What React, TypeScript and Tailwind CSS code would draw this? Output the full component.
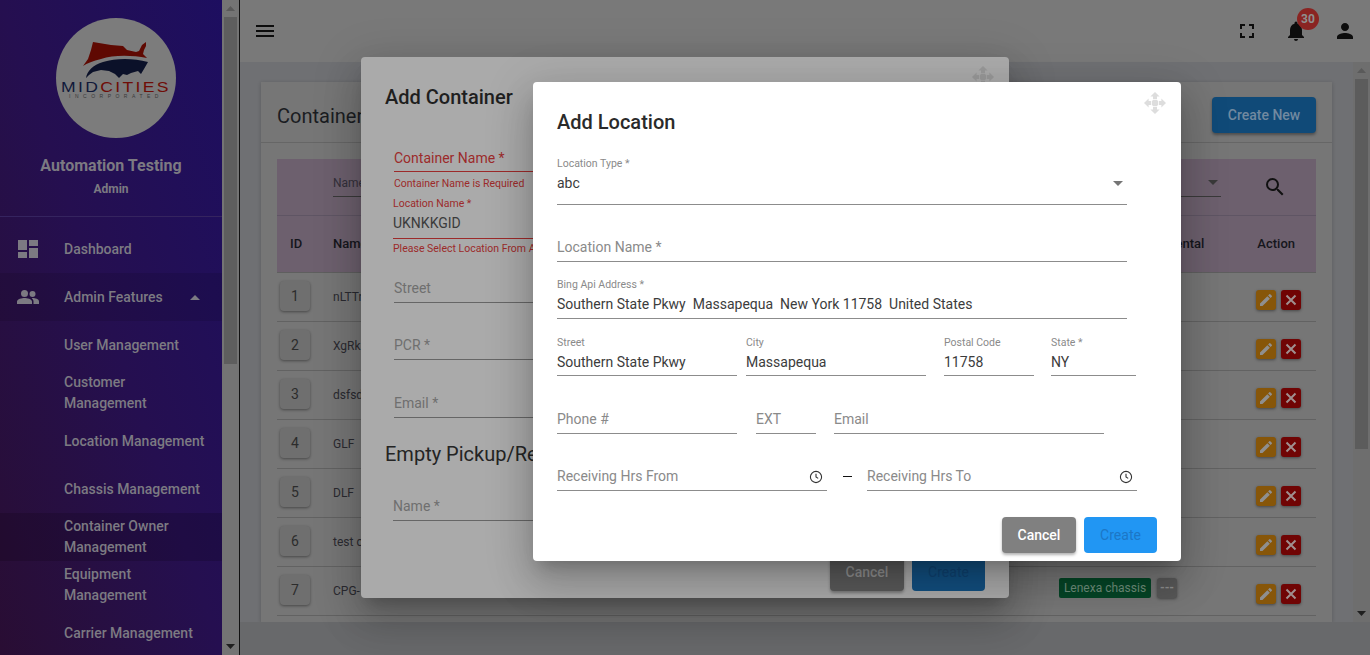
import React from 'react';

const sideItems = [
  { label: 'User Management', nowrap: true },
  { label: 'Customer Management' },
  { label: 'Location Management', nowrap: true },
  { label: 'Chassis Management', nowrap: true },
  { label: 'Container Owner Management', active: true },
  { label: 'Equipment Management' },
  { label: 'Carrier Management', nowrap: true },
];

const rows = ['nLTTr', 'XgRk', 'dsfsd', 'GLF', 'DLF', 'test c', 'CPG-'];

const ScrollArrow = ({ up }: { up?: boolean }) => (
  <div className="h-[17px] flex items-center justify-center shrink-0">
    <svg width="9" height="5" viewBox="0 0 9 5" className={up ? 'fill-[#5a5a5a]' : 'fill-[#1f1f1f]'}>
      <path d={up ? 'M4.5 0 9 5H0z' : 'M0 0h9L4.5 5z'} />
    </svg>
  </div>
);

const MoveIcon = ({ className }: { className: string }) => (
  <svg width="22" height="22" viewBox="0 0 22 22" className={className}>
    <path d="M11 0l4.6 4.6H13v2.6H9V4.6H6.4z" />
    <path d="M11 22l4.6-4.6H13v-2.6H9v2.6H6.4z" />
    <path d="M0 11l4.6-4.6V9h2.6v4H4.6v2.6z" />
    <path d="M22 11l-4.6-4.6V9h-2.6v4h2.6v2.6z" />
    <path d="M9 8h4l1 1v4l-1 1H9l-1-1V9z" />
  </svg>
);

const ClockIcon = () => (
  <svg width="14" height="14" viewBox="0 0 14 14" fill="none" stroke="#333" strokeWidth="1.1">
    <circle cx="7" cy="7" r="5.6" />
    <path d="M7 3.8V7l2.2 1.4" />
  </svg>
);

const Logo = () => (
  <div className="w-[120px] h-[120px] rounded-full bg-[#7c7c7c] flex flex-col items-center shrink-0 overflow-hidden">
    <svg width="70" height="36" viewBox="0 0 70 36" className="mt-[24px] shrink-0">
      <path fill="#5f0902" d="M12 0L30 3 42 4 46 8 55 10 58 9 61 3 65 0 65 4 63 8 62 12 66 16C50 13 32 13 20 17 12 19 6 21 2 24L7 17 10 8Z" />
      <path fill="#0b1129" d="M5 36C6 29 12 23 22 20 35 16 52 16 67 20L63 27 60 32 57 29 50 31 46 33 42 32 38 36 34 32 28 29 20 28 12 30 8 33Z" />
    </svg>
    <div className="mt-[0.5px] flex justify-center font-['Liberation_Sans',sans-serif] text-[15px] leading-[15px] scale-x-[1.17] tracking-[2px] whitespace-nowrap">
      <span className="text-[#10193a]">MID</span>
      <span className="text-[#6f0d07]">CITIES</span>
    </div>
    <div className="mt-[-0.5px] text-[5px] leading-[6px] tracking-[4.5px] whitespace-nowrap text-[#3a3a3a] font-['Liberation_Sans',sans-serif]">INCORPORATED</div>
  </div>
);

const Sidebar = () => (
  <aside className="w-[222px] shrink-0 h-full overflow-hidden flex flex-col items-stretch bg-gradient-to-bl from-[#1d0e60] via-[#250f50] to-[#290d33] text-[#7c7a82]">
    <div className="h-[217px] shrink-0 border-b border-[#35245f] flex flex-col items-center pt-[18px]">
      <div className="pl-[10px]"><Logo /></div>
      <div className="mt-[17px] text-[16px] leading-[22px] font-bold">Automation Testing</div>
      <div className="mt-[4px] text-[12px] leading-[16px] font-bold">Admin</div>
    </div>
    <div className="h-[56px] shrink-0 flex items-center pl-[18px] text-[14px] font-medium pt-[8px]">
      <svg width="20" height="18" viewBox="0 0 20 18" className="fill-[#7c7a82] mr-[26px]">
        <path d="M0 0h9v10H0zM0 12h9v6H0zM11 0h9v6h-9zM11 8h9v10h-9z" />
      </svg>
      Dashboard
    </div>
    <div className="h-[48px] shrink-0 flex items-center pl-[17px] text-[14px] font-medium bg-black/10">
      <svg width="22" height="14" viewBox="0 0 22 14" className="fill-[#7c7a82] mr-[25px]">
        <circle cx="7.5" cy="3.5" r="3.5" />
        <circle cx="15.5" cy="4" r="3" />
        <path d="M0 14v-2.5C0 9 5 8 7.5 8S15 9 15 11.5V14zM16.5 14v-2.5c0-1.4-.7-2.4-1.8-3.3.4 0 .8-.1 1.1-.1 2.2 0 6.2 1 6.2 3.4V14z" />
      </svg>
      Admin Features
      <svg width="10" height="5" viewBox="0 0 10 5" className="fill-[#7c7a82] ml-[27px]">
        <path d="M5 0l5 5H0z" />
      </svg>
    </div>
    {sideItems.map((item) => (
      <div
        key={item.label}
        className={`h-[48px] shrink-0 flex items-center pl-[64px] pr-[16px] text-[14px] leading-[21px] font-medium ${item.active ? 'bg-black/15' : ''}`}
      >
        <span className={item.nowrap ? 'whitespace-nowrap' : 'w-[120px]'}>{item.label}</span>
      </div>
    ))}
  </aside>
);

const RowActions = () => (
  <div className="flex gap-[5px] mt-[6px]">
    <button className="w-[20px] h-[20px] rounded-[3px] bg-[#875609] shadow-[0_1px_3px_rgba(0,0,0,.4)] flex items-center justify-center">
      <svg width="16" height="16" viewBox="0 0 24 24" className="fill-[#8f8f8f]">
        <path d="M3 17.25V21h3.75L17.81 9.94l-3.75-3.75L3 17.25zM20.71 7.04a1 1 0 0 0 0-1.41l-2.34-2.34a1 1 0 0 0-1.41 0l-1.83 1.83 3.75 3.75 1.83-1.83z" />
      </svg>
    </button>
    <button className="w-[20px] h-[20px] rounded-[3px] bg-[#700404] shadow-[0_1px_3px_rgba(0,0,0,.4)] flex items-center justify-center">
      <svg width="12" height="12" viewBox="0 0 12 12" stroke="#a08f8f" strokeWidth="2">
        <path d="M1.5 1.5l9 9M10.5 1.5l-9 9" />
      </svg>
    </button>
  </div>
);

const ContainerCard = () => (
  <div className="mx-[21px] mt-[20px] bg-[#767676] flex-1 min-h-0 overflow-hidden shadow-[0_1px_4px_rgba(0,0,0,.2)]">
    <div className="h-[61px] flex items-center justify-between pl-[16px] pr-[16px] border-b border-[#666666]">
      <div className="text-[20px] text-[#1b1d22] pt-[8px]">Container Owner Management</div>
      <button className="w-[104px] h-[36px] mt-[6px] rounded-[4px] bg-[#104a78] text-[#7189a0] text-[14px] font-medium shadow-[0_2px_3px_rgba(0,0,0,.35)]">Create New</button>
    </div>
    <div className="mx-[16px] mt-[16px]">
      <div className="h-[114px] bg-[#6d606e] border-b border-[#5f5f5f] flex flex-col text-[#15161c]">
        <div className="h-[57px] border-b border-[#5f5564] flex items-start">
          <div className="ml-[56px] mt-[10px] w-[200px] h-[28px] border-b border-[#3a3a3a] flex items-center text-[12px] text-[#33303a]">Name</div>
          <div className="ml-auto mt-[10px] w-[100px] h-[28px] border-b border-[#3a3a3a] flex items-center justify-end pr-[3px]">
            <svg width="10" height="5" viewBox="0 0 10 5" className="fill-[#3a3a3a]"><path d="M0 0h10L5 5z" /></svg>
          </div>
          <svg width="24" height="24" viewBox="0 0 24 24" className="self-center ml-[42px] mr-[29px] fill-[#111]">
            <path d="M15.5 14h-.79l-.28-.27A6.47 6.47 0 0 0 16 9.5 6.5 6.5 0 1 0 9.5 16c1.61 0 3.09-.59 4.23-1.57l.27.28v.79l5 4.99L20.49 19l-4.99-5zm-6 0C7.01 14 5 11.99 5 9.5S7.01 5 9.5 5 14 7.01 14 9.5 11.99 14 9.5 14z" />
          </svg>
        </div>
        <div className="flex-1 flex items-center text-[13px] font-medium">
          <div className="ml-[13px] w-[43px]">ID</div>
          <div>Name</div>
          <div className="ml-auto mr-[53px]">Rental</div>
          <div className="mr-[21px]">Action</div>
        </div>
      </div>
      {rows.map((name, i) => (
        <div key={name} className="h-[49px] border-b border-[#626262] flex items-center">
          <div className="ml-[3px] mb-[2px] w-[30px] h-[30px] rounded-[4px] bg-[#6f6f6f] shadow-[0_1px_3px_rgba(0,0,0,.4)] flex items-center justify-center text-[14px] text-[#2c2c2c]">{i + 1}</div>
          <div className="ml-[23px] mb-[1px] text-[12px] text-[#2a2a30]">{name}</div>
          {i === 6 && (
            <div className="ml-auto flex items-center mb-[6px] mr-[79px]">
              <span className="w-[92px] h-[20px] rounded-[2px] bg-[#054526] text-[#6f8f7c] text-[12px] flex items-center justify-center">Lenexa chassis</span>
              <span className="ml-[6px] w-[20px] h-[20px] rounded-[3px] bg-[#585858] text-[#8f8f8f] text-[12px] font-bold flex items-center justify-center shadow-[0_1px_3px_rgba(0,0,0,.4)]">---</span>
            </div>
          )}
          <div className={i === 6 ? 'mr-[15px]' : 'ml-auto mr-[15px]'}><RowActions /></div>
        </div>
      ))}
    </div>
  </div>
);

const TopBar = () => (
  <header className="h-[62px] shrink-0 bg-[#797979] flex items-center pl-[13px] pr-[13px]">
    <svg width="24" height="24" viewBox="0 0 24 24" className="fill-[#0d0d0d]"><path d="M3 18h18v-2H3v2zm0-5h18v-2H3v2zm0-7v2h18V6H3z" /></svg>
    <svg width="24" height="24" viewBox="0 0 24 24" className="ml-auto fill-[#0d0d0d]"><path d="M7 14H5v5h5v-2H7v-3zm-2-4h2V7h3V5H5v5zm12 7h-3v2h5v-5h-2v3zM14 5v2h3v3h2V5h-5z" /></svg>
    <div className="relative ml-[25px] w-[24px] h-[24px]">
      <svg width="24" height="24" viewBox="0 0 24 24" className="fill-[#0d0d0d]"><path d="M12 22c1.1 0 2-.9 2-2h-4a2 2 0 0 0 2 2zm6-6v-5c0-3.07-1.63-5.64-4.5-6.32V4a1.5 1.5 0 0 0-3 0v.68C7.64 5.36 6 7.92 6 11v5l-2 2v1h16v-1l-2-2z" /></svg>
      <span className="absolute left-[13px] top-[-11px] w-[22px] h-[22px] rounded-full bg-[#8a2422] text-[#8f8f8f] text-[12px] font-bold flex items-center justify-center">30</span>
    </div>
    <svg width="24" height="24" viewBox="0 0 24 24" className="ml-[25px] fill-[#0d0d0d]"><path d="M12 12c2.21 0 4-1.79 4-4s-1.79-4-4-4-4 1.79-4 4 1.79 4 4 4zm0 2c-2.67 0-8 1.34-8 4v2h16v-2c0-2.66-5.33-4-8-4z" /></svg>
  </header>
);

const darkField = 'h-[28px] pt-[3px] leading-[20px] border-b border-[#666666] text-[14px] text-[#6f6f6f]';

const AddContainer = () => (
  <section className="absolute left-[361px] top-[57px] w-[648px] h-[541px] rounded-[4px] bg-[#aaaaaa] shadow-[0_11px_15px_-7px_rgba(0,0,0,.2),0_24px_38px_3px_rgba(0,0,0,.14),0_9px_46px_8px_rgba(0,0,0,.12)] px-[24px] pt-[26px]">
    <MoveIcon className="absolute right-[15px] top-[9px] fill-[#999999]" />
    <h2 className="text-[20px] leading-[28px] font-medium text-[#1f1f1f]">Add Container</h2>
    <div className="ml-[9px] mt-[34px] h-[27px] border-b border-[#9c2a2a] text-[14px] leading-[20px] text-[#9c2a2a] pt-[3px]">Container Name *</div>
    <div className="ml-[9px] mt-[5px] text-[10.5px] leading-[14px] text-[#9c2a2a]">Container Name is Required</div>
    <div className="ml-[8px] mt-[6px] text-[10.5px] leading-[14px] text-[#9c2a2a]">Location Name *</div>
    <div className="ml-[8px] mt-[2px] h-[26px] border-b border-[#9c2a2a] text-[14px] leading-[20px] text-[#3b3b3b]">UKNKKGID</div>
    <div className="ml-[8px] mt-[3px] text-[10.5px] leading-[14px] text-[#9c2a2a] whitespace-nowrap">Please Select Location From Autocomplete</div>
    <div className={`ml-[9px] mt-[19px] ${darkField}`}>Street</div>
    <div className={`ml-[9px] mt-[29px] ${darkField}`}>PCR *</div>
    <div className={`ml-[9px] mt-[30px] ${darkField}`}>Email *</div>
    <h3 className="mt-[22px] text-[20px] leading-[28px] text-[#242424] whitespace-nowrap">Empty Pickup/Return Location</h3>
    <div className={`ml-[8px] mt-[25px] ${darkField}`}>Name *</div>
    <div className="flex justify-end gap-[8px] mt-[34px]">
      <button className="w-[74px] h-[36px] rounded-[4px] bg-[#5a5a5a] text-[#8f8f8f] text-[14px] font-medium shadow-[0_2px_3px_rgba(0,0,0,.3)] pb-[2px]">Cancel</button>
      <button className="w-[73px] h-[36px] rounded-[4px] bg-[#124f80] text-[#0f4270] text-[14px] pb-[2px]">Create</button>
    </div>
  </section>
);

const Field = ({
  label,
  value,
  width,
  pad = 'pb-[3px]',
  children,
  className = '',
}: {
  label?: string;
  value: string;
  width: string;
  pad?: string;
  children?: React.ReactNode;
  className?: string;
}) => (
  <div className={`${width} ${pad} ${className} h-[50px] shrink-0 border-b border-[#8c8c8c] flex flex-col justify-end`}>
    {label && <div className="text-[10.5px] leading-[13px] mb-[3.5px] text-[#8a8a8a] whitespace-nowrap">{label}</div>}
    <div className={`flex items-center justify-between text-[14px] leading-[20px] ${label ? 'text-[#3c3c3c]' : 'text-[#8a8a8a]'}`}>
      <span className="whitespace-pre">{value}</span>
      {children}
    </div>
  </div>
);

const AddLocation = () => (
  <section className="absolute left-[533px] top-[82px] w-[648px] h-[479px] rounded-[4px] bg-white shadow-[0_11px_15px_-7px_rgba(0,0,0,.2),0_24px_38px_3px_rgba(0,0,0,.14),0_9px_46px_8px_rgba(0,0,0,.12)] px-[24px] pt-[26px]">
    <MoveIcon className="absolute right-[15px] top-[10px] fill-[#dddddd]" />
    <h2 className="text-[20px] leading-[28px] font-medium text-[#2a2a2a] mb-[19px]">Add Location</h2>
    <div className="flex flex-col gap-[7px]">
      <Field label="Location Type *" value="abc" width="w-[570px]" pad="pb-[11px]">
        <svg width="10" height="5" viewBox="0 0 10 5" className="fill-[#757575] mr-[4px]"><path d="M0 0h10L5 5z" /></svg>
      </Field>
      <Field value="Location Name *" width="w-[570px]" pad="pb-[4px]" />
      <Field label="Bing Api Address *" value="Southern State Pkwy  Massapequa  New York 11758  United States" width="w-[570px]" pad="pb-[4px]" />
      <div className="flex">
        <Field label="Street" value="Southern State Pkwy" width="w-[180px]" />
        <Field label="City" value="Massapequa" width="w-[180px]" className="ml-[9px]" />
        <Field label="Postal Code" value="11758" width="w-[90px]" className="ml-[18px]" />
        <Field label="State *" value="NY" width="w-[85px]" className="ml-[17px]" />
      </div>
      <div className="flex mt-[1px]">
        <Field value="Phone #" width="w-[180px]" pad="pb-[4px]" />
        <Field value="EXT" width="w-[60px]" pad="pb-[4px]" className="ml-[19px]" />
        <Field value="Email" width="w-[270px]" pad="pb-[4px]" className="ml-[18px]" />
      </div>
      <div className="flex items-end">
        <Field value="Receiving Hrs From" width="w-[270px]" pad="pb-[4px]"><span className="mr-[4px] mb-[-2px]"><ClockIcon /></span></Field>
        <div className="w-[40px] flex justify-center mb-[14px]"><div className="w-[9px] h-[1px] bg-[#111111]" /></div>
        <Field value="Receiving Hrs To" width="w-[270px]" pad="pb-[4px]"><span className="mr-[4px] mb-[-2px]"><ClockIcon /></span></Field>
      </div>
    </div>
    <div className="flex justify-end gap-[8px] mt-[26px]">
      <button className="w-[74px] h-[36px] rounded-[4px] bg-[#808080] text-white text-[14px] font-medium shadow-[0_2px_3px_rgba(0,0,0,.3)]">Cancel</button>
      <button className="w-[73px] h-[36px] rounded-[4px] bg-[#2196f3] text-[#1c76c6] text-[14px]">Create</button>
    </div>
  </section>
);

export default function App() {
  return (
    <div className="relative w-[1370px] h-[655px] overflow-hidden flex font-['Roboto',sans-serif] bg-[#6f7073]">
      <Sidebar />
      <div className="w-[18px] h-full shrink-0 bg-[#747474] border-r border-[#111111] flex flex-col">
        <ScrollArrow up />
        <div className="mx-[2px] h-[347px] bg-[#5e5e5e]" />
        <div className="flex-1" />
        <ScrollArrow />
      </div>
      <div className="flex-1 min-w-0 flex flex-col">
        <TopBar />
        <div className="h-[560px] shrink-0 flex">
          <main className="flex-1 min-w-0 flex flex-col">
            <ContainerCard />
          </main>
          <div className="w-[17px] bg-[#6e6e6e] flex flex-col">
            <ScrollArrow up />
            <div className="mx-[2px] h-[370px] bg-[#5c5c5c]" />
            <div className="flex-1" />
            <ScrollArrow />
          </div>
        </div>
        <footer className="flex-1 bg-[#68696b]" />
      </div>
      <AddContainer />
      <AddLocation />
    </div>
  );
}
